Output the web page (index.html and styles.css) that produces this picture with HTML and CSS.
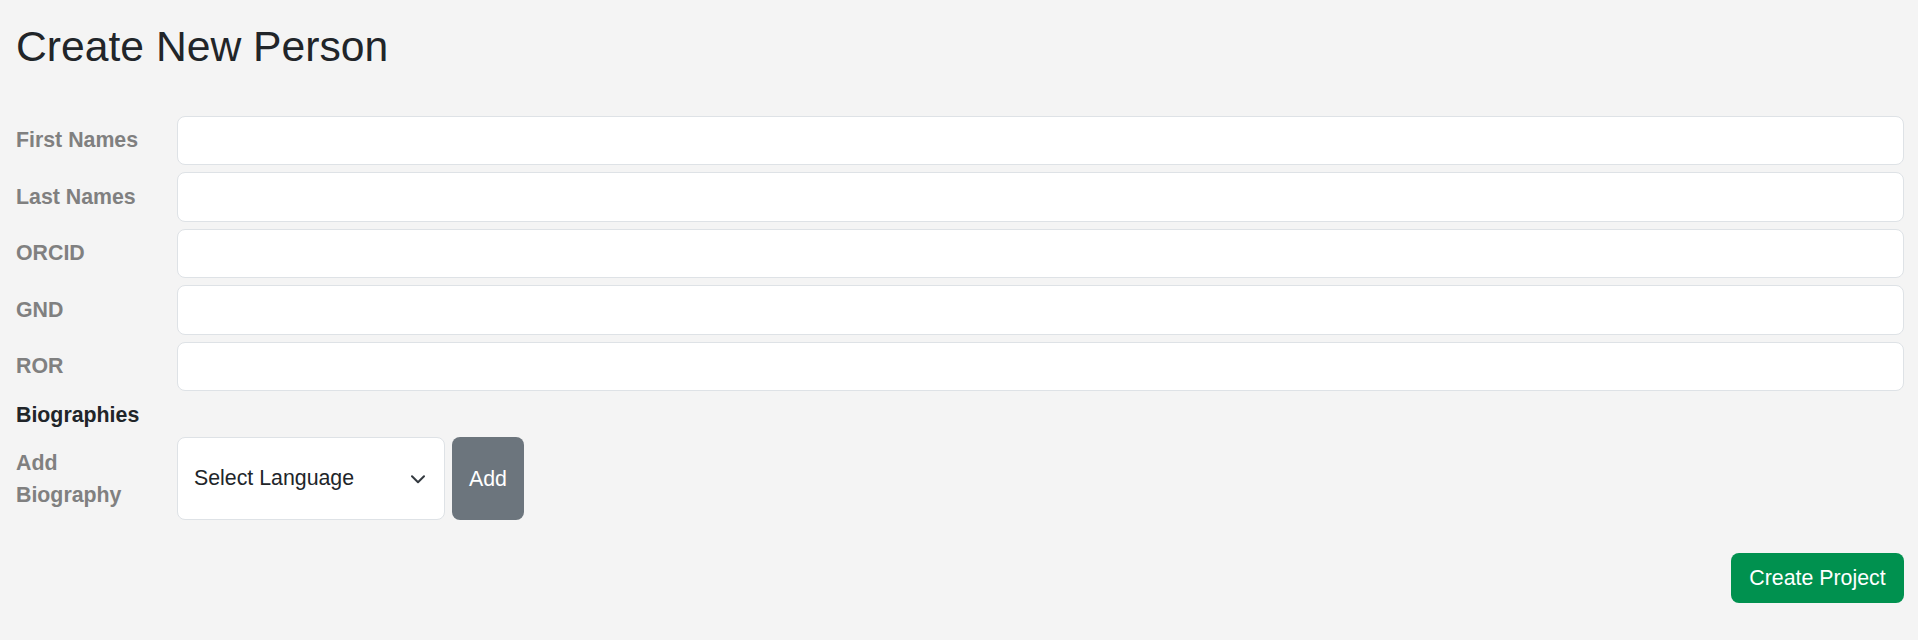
FILE: index.html
```html
<!DOCTYPE html>
<html lang="en">
<head>
<meta charset="utf-8">
<title>Create New Person</title>
<link rel="stylesheet" href="styles.css">
</head>
<body>
<main class="page">
  <h1 class="title">Create New Person</h1>
  <form class="form">
    <div class="row">
      <label class="label" for="first">First Names</label>
      <input class="input" id="first" type="text">
    </div>
    <div class="row">
      <label class="label" for="last">Last Names</label>
      <input class="input" id="last" type="text">
    </div>
    <div class="row">
      <label class="label" for="orcid">ORCID</label>
      <input class="input" id="orcid" type="text">
    </div>
    <div class="row">
      <label class="label" for="gnd">GND</label>
      <input class="input" id="gnd" type="text">
    </div>
    <div class="row">
      <label class="label" for="ror">ROR</label>
      <input class="input" id="ror" type="text">
    </div>
    <div class="section">Biographies</div>
    <div class="row bio-row">
      <label class="label" for="lang">Add Biography</label>
      <div class="bio-controls">
        <div class="select">
          <span class="select-text">Select Language</span>
          <svg class="chevron" width="14" height="9" viewBox="0 0 14 9"><path d="M1 1.2l6 6 6-6" fill="none" stroke="#343a40" stroke-width="2" stroke-linecap="round" stroke-linejoin="round"/></svg>
        </div>
        <button type="button" class="btn btn-add">Add</button>
      </div>
    </div>
    <div class="actions">
      <button type="button" class="btn btn-create">Create Project</button>
    </div>
  </form>
</main>
</body>
</html>
```

FILE: styles.css
```css
* { box-sizing: border-box; }
html, body { margin: 0; padding: 0; }
body {
  background: #f4f4f4;
  font-family: "Liberation Sans", Arial, sans-serif;
  font-size: 21.33px;
  line-height: 32px;
  color: #212529;
}
.page {
  padding: 21px 14px 0 16px;
}
.title {
  margin: 0;
  font-size: 42.67px;
  font-weight: 400;
  line-height: 51.2px;
  color: #212529;
}
.form {
  margin-top: 43.5px;
  display: flex;
  flex-direction: column;
}
.row {
  display: flex;
  align-items: center;
  margin-bottom: 7px;
}
.label {
  width: 161px;
  flex: 0 0 161px;
  padding-right: 16px;
  font-weight: 700;
  color: #808080;
}
.input {
  flex: 1;
  height: 49.5px;
  border: 1px solid #dee2e6;
  border-radius: 8px;
  background: #fff;
  font: inherit;
  padding: 0 16px;
}
.section {
  margin-top: 0.5px;
  font-weight: 700;
  color: #212529;
  margin-bottom: 6.5px;
}
.bio-row { align-items: center; }
.bio-controls {
  display: flex;
  gap: 7px;
  height: 83px;
}
.select {
  width: 268px;
  height: 83px;
  border: 1px solid #dee2e6;
  border-radius: 8px;
  background: #fff;
  display: flex;
  align-items: center;
  justify-content: space-between;
  padding: 0 19px 0 16px;
  color: #212529;
}
.select-text { margin-top: -1px; }
.chevron { display: block; margin-top: 1px; }
.btn {
  border: none;
  border-radius: 8px;
  color: #fff;
  font: inherit;
  cursor: pointer;
}
.btn-add {
  width: 72px;
  height: 83px;
  background: #6c757d;
  padding: 0;
}
.actions {
  display: flex;
  justify-content: flex-end;
  margin-top: 25.5px;
}
.btn-create {
  width: 173px;
  height: 50px;
  background: #00914f;
  padding: 0;
}
```
